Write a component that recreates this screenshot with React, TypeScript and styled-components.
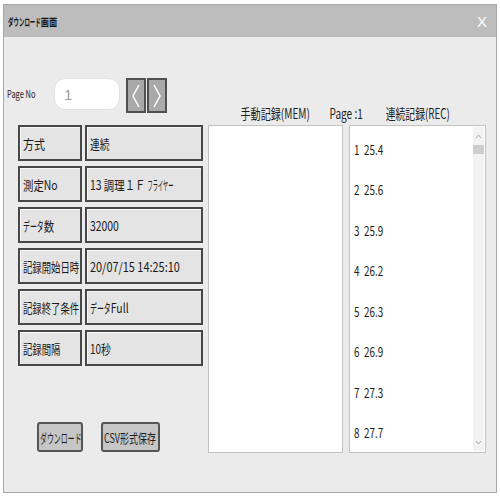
import React from "react";
import styled, { createGlobalStyle } from "styled-components";

const GlobalStyle = createGlobalStyle`
  html, body {
    margin: 0;
    padding: 0;
    background: #ffffff;
  }
  body {
    font-family: "Noto Sans CJK JP", "Noto Sans", sans-serif;
    color: #1e1e1e;
  }
`;

const Page = styled.div`
  width: 500px;
  height: 500px;
  box-sizing: border-box;
  padding: 4px 3px 7px 3px;
  display: flex;
`;

const Window = styled.div`
  flex: 1;
  display: flex;
  flex-direction: column;
  border: 1px solid #a8a8a8;
  background: #ebebeb;
`;

const TitleBar = styled.div`
  height: 32px;
  flex: none;
  background: #bdbdbd;
  display: flex;
  align-items: center;
  justify-content: space-between;
  padding: 0 9px 0 4px;
`;

const Squeeze = styled.span<{ $scale?: number; $origin?: string }>`
  display: inline-block;
  white-space: nowrap;
  transform: scaleX(${(p) => p.$scale ?? 0.8});
  transform-origin: ${(p) => p.$origin ?? "left center"};
`;

/* katakana run drawn at half width, as the original UI font does */
const Kana = styled.span<{ $n: number; $w: number }>`
  display: inline-block;
  transform: scaleX(${(p) => p.$w / p.$n});
  transform-origin: left center;
  margin-right: ${(p) => p.$w - p.$n}em;
`;

const VOICED = "ガギグゲゴザジズゼゾダヂヅデドバビブベボパピプペポヴ";

const Txt: React.FC<{ children: string }> = ({ children }) => (
  <>
    {children.split(/([\u30A0-\u30FF]+)/).map((part, i) => {
      if (!/^[\u30A0-\u30FF]+$/.test(part)) return part;
      const w = [...part].reduce((s, c) => s + (VOICED.includes(c) ? 1 : 0.5), 0);
      return (
        <Kana key={i} $n={part.length} $w={w}>
          {part}
        </Kana>
      );
    })}
  </>
);

const TitleText = styled(Squeeze)`
  font-size: 10.5px;
  font-weight: 700;
  color: #141414;
`;

const CloseMark = styled.span`
  font-family: "Liberation Sans", sans-serif;
  font-size: 15px;
  color: #ffffff;
`;

const Body = styled.div`
  flex: 1;
  display: flex;
`;

const LeftPane = styled.div`
  width: 204px;
  flex: none;
  display: flex;
  flex-direction: column;
  padding-top: 41px;
`;

const PageRow = styled.div`
  display: flex;
  align-items: center;
  height: 35px;
  padding-left: 3px;
`;

const PageLabel = styled(Squeeze)`
  font-size: 11px;
  width: 47px;
  margin-top: -6px;
`;

const PageInput = styled.div`
  width: 66px;
  height: 32px;
  box-sizing: border-box;
  margin-top: -3px;
  background: #ffffff;
  border: 1px solid #e2e2e2;
  border-radius: 11px;
  display: flex;
  align-items: center;
  padding-left: 9px;
  font-family: "Liberation Sans", sans-serif;
  font-size: 15px;
  color: #a0a0a0;
`;

const NavGroup = styled.div`
  display: flex;
  margin-left: 6px;
`;

const NavButton = styled.div`
  width: 20px;
  height: 35px;
  box-sizing: border-box;
  background: #a9a9a9;
  border: 2px solid #505050;
  display: flex;
  align-items: center;
  justify-content: center;
  & + & {
    margin-left: 1px;
  }
`;

const Table = styled.div`
  margin: 12px 0 0 14px;
  display: grid;
  grid-template-columns: 64px 118px;
  column-gap: 3px;
  row-gap: 5px;
`;

const Cell = styled.div`
  height: 36px;
  box-sizing: border-box;
  background: #e4e4e4;
  border: 2px solid #474747;
  box-shadow: inset 1px 1px 0 #f8f8f8;
  display: flex;
  align-items: center;
  padding-left: 3px;
  font-size: 13px;
  color: #1a1a1a;
`;

const ButtonRow = styled.div`
  display: flex;
  gap: 18px;
  margin-top: 56px;
  padding-left: 33px;
`;

const ActionButton = styled.div<{ $w: number }>`
  width: ${(p) => p.$w}px;
  height: 30px;
  box-sizing: border-box;
  background: #c6c6c6;
  border: 2px solid #555555;
  border-radius: 3px;
  display: flex;
  align-items: center;
  padding-left: 1px;
  font-size: 13px;
`;

const RightPane = styled.div`
  flex: 1;
  display: flex;
  flex-direction: column;
  padding: 64px 10px 0 0;
`;

const Columns = styled.div`
  display: grid;
  grid-template-columns: 135px 6px 137px;
`;

const HeaderCell = styled.div`
  height: 24px;
  display: flex;
  justify-content: center;
  align-items: center;
  font-size: 14px;
`;

const ListBox = styled.div`
  height: 328px;
  box-sizing: border-box;
  background: #ffffff;
  border: 1px solid #c2c2c2;
  display: flex;
  overflow: hidden;
`;

const Items = styled.div`
  flex: 1;
  padding: 3px 0 0 4px;
`;

const Item = styled.div`
  height: 40.5px;
  display: flex;
  align-items: center;
  font-size: 13px;
`;

const ScrollTrack = styled.div`
  width: 11px;
  margin: 1px 1px 1px 0;
  background: #f2f2f2;
  display: flex;
  flex-direction: column;
  align-items: center;
`;

const ScrollArrow = styled.div`
  height: 18px;
  display: flex;
  align-items: center;
  justify-content: center;
`;

const ScrollThumb = styled.div`
  width: 11px;
  height: 9px;
  background: #cdcdcd;
`;

const Spacer = styled.div`
  flex: 1;
`;

const Chevron: React.FC<{ dir: "left" | "right" }> = ({ dir }) => (
  <svg width="12" height="26" viewBox="0 0 12 26">
    <polyline
      points={dir === "left" ? "9,2 3,13 9,24" : "3,2 9,13 3,24"}
      fill="none"
      stroke="#ffffff"
      strokeWidth="1.5"
    />
  </svg>
);

const SmallArrow: React.FC<{ dir: "up" | "down" }> = ({ dir }) => (
  <svg width="7" height="5" viewBox="0 0 7 5">
    <polyline
      points={dir === "up" ? "1,4 3.5,1 6,4" : "1,1 3.5,4 6,1"}
      fill="none"
      stroke="#a0a0a0"
      strokeWidth="0.9"
    />
  </svg>
);

const rows: { label: string; ls: number; value: string; vs: number }[] = [
  { label: "方式", ls: 0.85, value: "連続", vs: 0.75 },
  { label: "測定No", ls: 0.8, value: "13 調理１Ｆ フライヤー", vs: 0.8 },
  { label: "データ数", ls: 0.8, value: "32000", vs: 0.8 },
  { label: "記録開始日時", ls: 0.72, value: "20/07/15 14:25:10", vs: 0.84 },
  { label: "記録終了条件", ls: 0.72, value: "データFull", vs: 0.8 },
  { label: "記録間隔", ls: 0.72, value: "10秒", vs: 0.76 },
];

const records = ["25.4", "25.6", "25.9", "26.2", "26.3", "26.9", "27.3", "27.7"];

export default function App() {
  return (
    <>
      <GlobalStyle />
      <Page>
        <Window>
          <TitleBar>
            <TitleText $scale={0.78}>
              <Txt>ダウンロード画面</Txt>
            </TitleText>
            <CloseMark>X</CloseMark>
          </TitleBar>
          <Body>
            <LeftPane>
              <PageRow>
                <PageLabel $scale={0.68}>Page No</PageLabel>
                <PageInput>1</PageInput>
                <NavGroup>
                  <NavButton>
                    <Chevron dir="left" />
                  </NavButton>
                  <NavButton>
                    <Chevron dir="right" />
                  </NavButton>
                </NavGroup>
              </PageRow>
              <Table>
                {rows.map((r) => (
                  <React.Fragment key={r.label}>
                    <Cell>
                      <Squeeze $scale={r.ls}>
                        <Txt>{r.label}</Txt>
                      </Squeeze>
                    </Cell>
                    <Cell>
                      <Squeeze $scale={r.vs}>
                        <Txt>{r.value}</Txt>
                      </Squeeze>
                    </Cell>
                  </React.Fragment>
                ))}
              </Table>
              <ButtonRow>
                <ActionButton $w={46}>
                  <Squeeze $scale={0.8}>
                    <Txt>ダウンロード</Txt>
                  </Squeeze>
                </ActionButton>
                <ActionButton $w={59}>
                  <Squeeze $scale={0.69}>CSV形式保存</Squeeze>
                </ActionButton>
              </ButtonRow>
            </LeftPane>
            <RightPane>
              <Columns>
                <HeaderCell>
                  <Squeeze $scale={0.72} $origin="center">
                    手動記録(MEM)
                  </Squeeze>
                </HeaderCell>
                <HeaderCell>
                  <Squeeze $scale={0.72} $origin="center">
                    Page :1
                  </Squeeze>
                </HeaderCell>
                <HeaderCell>
                  <Squeeze $scale={0.7} $origin="center">
                    連続記録(REC)
                  </Squeeze>
                </HeaderCell>
                <ListBox />
                <div />
                <ListBox>
                  <Items>
                    {records.map((v, i) => (
                      <Item key={i}>
                        <Squeeze $scale={0.76}>
                          {i + 1}&nbsp;&nbsp;{v}
                        </Squeeze>
                      </Item>
                    ))}
                  </Items>
                  <ScrollTrack>
                    <ScrollArrow>
                      <SmallArrow dir="up" />
                    </ScrollArrow>
                    <ScrollThumb />
                    <Spacer />
                    <ScrollArrow>
                      <SmallArrow dir="down" />
                    </ScrollArrow>
                  </ScrollTrack>
                </ListBox>
              </Columns>
            </RightPane>
          </Body>
        </Window>
      </Page>
    </>
  );
}
